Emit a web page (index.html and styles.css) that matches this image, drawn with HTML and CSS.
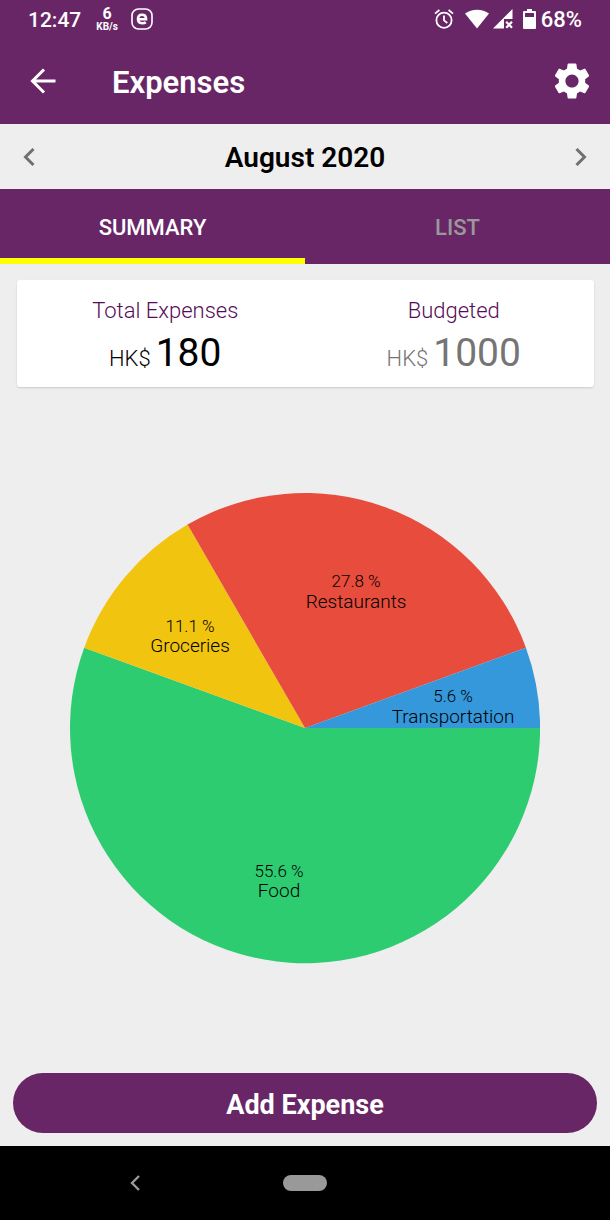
FILE: index.html
```html
<!DOCTYPE html>
<html lang="en">
<head>
<meta charset="utf-8">
<meta name="viewport" content="width=device-width, initial-scale=1">
<title>Expenses</title>
<link rel="stylesheet" href="styles.css">
</head>
<body>
<div class="status-bar">
  <div class="status-group">
    <span class="clock">12:47</span>
    <span class="net-speed"><b class="net-value">6</b><b class="net-unit">KB/s</b></span>
    <svg class="icon-app" viewBox="0 0 22 22" aria-hidden="true">
      <rect x="1" y="1" width="20" height="20" rx="6.5" fill="none" stroke="currentColor" stroke-width="1.6"/>
      <path d="M14.8 14.3C13.9 15 12.8 15.2 11.2 15.2C8 15.2 7 13.8 7 11C7 8.2 8.2 6.8 11 6.8C13.9 6.8 15 8 15 10.8V11.3H8" fill="none" stroke="currentColor" stroke-width="2.6"/>
    </svg>
  </div>
  <div class="status-group status-right">
    <svg class="icon-alarm" viewBox="0 0 20 20" aria-hidden="true" fill="none" stroke="currentColor" stroke-width="1.8">
      <circle cx="10" cy="11.2" r="7.6"/>
      <path d="M10 6.5V11.4L13.3 14"/>
      <path d="M1 4.6L5.4 1M19 4.6L14.6 1"/>
    </svg>
    <svg class="icon-wifi" viewBox="0 0 24 20" aria-hidden="true">
      <path d="M0 4.6C6.5-.6 17.5-.6 24 4.6L12 19.5Z" fill="currentColor"/>
    </svg>
    <svg class="icon-signal" viewBox="0 0 20 20" aria-hidden="true">
      <path d="M0 19.5L19.5 0V10H11V19.5Z" fill="currentColor"/>
      <path d="M13.2 12.8L19 18.8M19 12.8L13.2 18.8" stroke="currentColor" stroke-width="2.2"/>
    </svg>
    <svg class="icon-battery" viewBox="0 0 13 20" aria-hidden="true">
      <path fill="currentColor" fill-rule="evenodd" d="M4 0H9V2H12Q13 2 13 3V19Q13 20 12 20H1Q0 20 0 19V3Q0 2 1 2H4ZM2 4V8H11V4Z"/>
    </svg>
    <span class="battery-level">68%</span>
  </div>
</div>

<header class="app-bar">
  <button class="icon-button" type="button" aria-label="Back">
    <svg class="icon-back" viewBox="0 0 26 26" aria-hidden="true" fill="none" stroke="currentColor" stroke-width="3">
      <path d="M25.5 13H2.5M14 1.5L2.5 13L14 24.5"/>
    </svg>
  </button>
  <h1 class="title">Expenses</h1>
  <button class="icon-button" type="button" aria-label="Settings">
    <svg class="icon-settings" viewBox="0 0 24 24" aria-hidden="true">
      <path fill="currentColor" d="M19.14 12.94c.04-.3.06-.61.06-.94 0-.32-.02-.64-.07-.94l2.03-1.58c.18-.14.23-.41.12-.61l-1.92-3.32c-.12-.22-.37-.29-.59-.22l-2.39.96c-.5-.38-1.03-.7-1.62-.94l-.36-2.54c-.04-.24-.24-.41-.48-.41h-3.84c-.24 0-.43.17-.47.41l-.36 2.54c-.59.24-1.13.57-1.62.94l-2.39-.96c-.22-.08-.47 0-.59.22L2.74 8.87c-.12.21-.08.47.12.61l2.03 1.58c-.05.3-.09.63-.09.94s.02.64.07.94l-2.03 1.58c-.18.14-.23.41-.12.61l1.92 3.32c.12.22.37.29.59.22l2.39-.96c.5.38 1.03.7 1.62.94l.36 2.54c.05.24.24.41.48.41h3.84c.24 0 .44-.17.47-.41l.36-2.54c.59-.24 1.13-.56 1.62-.94l2.39.96c.22.08.47 0 .59-.22l1.92-3.32c.12-.22.07-.47-.12-.61l-2.01-1.58zM12 15.6c-1.98 0-3.6-1.62-3.6-3.6s1.62-3.6 3.6-3.6 3.6 1.62 3.6 3.6-1.62 3.6-3.6 3.6z"/>
    </svg>
  </button>
</header>

<div class="month-bar">
  <button class="month-button" type="button" aria-label="Previous month">
    <svg class="icon-chevron" viewBox="0 0 12 18" aria-hidden="true"><path d="M10.5 1L2.5 9L10.5 17" fill="none" stroke="currentColor" stroke-width="3"/></svg>
  </button>
  <h2 class="month">August 2020</h2>
  <button class="month-button" type="button" aria-label="Next month">
    <svg class="icon-chevron" viewBox="0 0 12 18" aria-hidden="true"><path d="M1.5 1L9.5 9L1.5 17" fill="none" stroke="currentColor" stroke-width="3"/></svg>
  </button>
</div>

<div class="tabs" role="tablist">
  <button class="tab tab-active" type="button" role="tab" aria-selected="true">SUMMARY</button>
  <button class="tab" type="button" role="tab" aria-selected="false">LIST</button>
</div>

<main class="content">
  <section class="card">
    <div class="total">
      <span class="total-label">Total Expenses</span>
      <span class="amount"><span class="currency">HK$ </span>180</span>
    </div>
    <div class="total">
      <span class="total-label">Budgeted</span>
      <span class="amount amount-muted"><span class="currency">HK$ </span>1000</span>
    </div>
  </section>

  <section class="chart">
    <svg class="pie" viewBox="0 0 470 470" role="img" aria-label="Expenses by category">
      <path class="slice-food" d="M235 235H470A235 235 0 1 1 14.2 154.6Z"/>
      <path class="slice-groceries" d="M235 235L14.2 154.6A235 235 0 0 1 117.5 31.5Z"/>
      <path class="slice-restaurants" d="M235 235L117.5 31.5A235 235 0 0 1 455.8 154.6Z"/>
      <path class="slice-transportation" d="M235 235L455.8 154.6A235 235 0 0 1 470 235Z"/>
      <text class="percent" x="286" y="94">27.8 %</text>
      <text class="category" x="286" y="115">Restaurants</text>
      <text class="percent" x="120" y="139">11.1 %</text>
      <text class="category" x="120" y="159">Groceries</text>
      <text class="percent" x="383" y="209">5.6 %</text>
      <text class="category" x="383" y="230">Transportation</text>
      <text class="percent" x="209" y="384">55.6 %</text>
      <text class="category" x="209" y="404">Food</text>
    </svg>
  </section>

  <button class="add-button" type="button">Add Expense</button>
</main>

<nav class="system-nav" aria-label="System">
  <button class="nav-back" type="button" aria-label="Back">
    <svg class="icon-nav-back" viewBox="0 0 10 16" aria-hidden="true"><path d="M9 1L2 8L9 15" fill="none" stroke="currentColor" stroke-width="2.4"/></svg>
  </button>
  <button class="nav-home" type="button" aria-label="Home"></button>
</nav>
</body>
</html>
```

FILE: styles.css
```css
* {
  box-sizing: border-box;
}

body {
  display: flex;
  flex-direction: column;
  min-height: 100vh;
  margin: 0;
  background: #eeeeee;
  color: #000000;
  font-family: Roboto, "Liberation Sans", sans-serif;
}

button {
  margin: 0;
  padding: 0;
  border: 0;
  background: none;
  color: inherit;
  font-family: inherit;
  cursor: pointer;
}

svg {
  display: block;
}

h1,
h2 {
  margin: 0;
  font-weight: 600;
}

/* Status bar */
.status-bar {
  display: flex;
  justify-content: space-between;
  padding: 5px 28px;
  background: #682666;
  color: #ffffff;
}

.status-group {
  display: flex;
  align-items: center;
  gap: 13px;
  height: 28px;
}

.status-right {
  gap: 4px;
}

.clock,
.battery-level {
  padding-top: 2px;
  font-size: 21px;
  line-height: 28px;
  font-weight: 500;
}

.battery-level {
  font-size: 22px;
}

.net-speed {
  display: flex;
  flex-direction: column;
  align-items: center;
  padding-left: 2px;
}

.net-value {
  font-size: 16px;
  line-height: 16px;
}

.net-unit {
  font-size: 10px;
  line-height: 10px;
}

.icon-app {
  width: 22px;
  height: 22px;
}

.icon-alarm {
  width: 20px;
  height: 20px;
  margin-right: 7px;
}

.icon-wifi {
  width: 24px;
  height: 20px;
}

.icon-signal {
  width: 20px;
  height: 20px;
  margin-right: 6px;
}

.icon-battery {
  width: 13px;
  height: 20px;
  margin-right: 1px;
}

/* App bar */
.app-bar {
  display: flex;
  align-items: center;
  padding: 21px 16px;
  background: #682666;
  color: #ffffff;
}

.icon-button {
  padding-left: 14px;
}

.icon-back {
  width: 26px;
  height: 26px;
}

.title {
  flex: 1;
  padding: 4px 0 0 56px;
  font-size: 31px;
  line-height: 40px;
}

.icon-settings {
  width: 44px;
  height: 44px;
}

/* Month selector */
.month-bar {
  display: flex;
  align-items: center;
  justify-content: space-between;
  padding: 16px 23px;
}

.month {
  padding-top: 3px;
  font-size: 28px;
  line-height: 30px;
}

.month-button {
  color: #707070;
}

.icon-chevron {
  width: 12px;
  height: 18px;
}

/* Tabs */
.tabs {
  display: grid;
  grid-template-columns: 1fr 1fr;
  background: #682666;
}

.tab {
  padding: 26px 0 18px;
  border-bottom: 6px solid transparent;
  color: #999999;
  font-size: 22px;
  line-height: 25px;
  font-weight: 500;
}

.tab-active {
  border-bottom-color: #ffff00;
  color: #ffffff;
}

/* Summary */
.content {
  display: flex;
  flex: 1;
  flex-direction: column;
  padding: 16px 13px 13px;
}

.card {
  display: grid;
  grid-template-columns: 1fr 1fr;
  gap: 8px;
  margin: 0 3px 0 4px;
  padding: 16px 0 9px 8px;
  border-radius: 3px;
  background: #ffffff;
  box-shadow: 0 1px 2px rgba(0, 0, 0, 0.15);
}

.total {
  display: flex;
  flex-direction: column;
  align-items: center;
  gap: 2px;
}

.total-label {
  color: #560d59;
  font-size: 22px;
  line-height: 30px;
  font-weight: 350;
}

.amount {
  display: flex;
  align-items: baseline;
  gap: 5px;
  font-size: 39px;
  line-height: 50px;
}

.amount-muted {
  color: #757575;
}

.currency {
  font-size: 22px;
  line-height: 30px;
  font-weight: 350;
}

/* Pie chart */
.chart {
  display: flex;
  flex: 1;
  align-items: center;
  justify-content: center;
  padding-bottom: 3px;
}

.pie {
  width: 80.5%;
}

.slice-food {
  fill: #2ecc71;
}

.slice-groceries {
  fill: #f1c40f;
}

.slice-restaurants {
  fill: #e74c3c;
}

.slice-transportation {
  fill: #3498db;
}

.percent,
.category {
  text-anchor: middle;
}

.percent {
  font-size: 17px;
  font-weight: 300;
}

.category {
  font-size: 19px;
  font-weight: 300;
}

.add-button {
  padding: 16px 14px 12px;
  border-radius: 30px;
  background: #682666;
  color: #ffffff;
  font-size: 27px;
  line-height: 32px;
  font-weight: 700;
}

/* System navigation */
.system-nav {
  display: grid;
  grid-template-columns: 1fr 44px 1fr;
  align-items: center;
  justify-items: center;
  padding: 29px 0;
  background: #000000;
  color: #999999;
}

.nav-back {
  margin-right: 13px;
}

.icon-nav-back {
  width: 10px;
  height: 16px;
}

.nav-home {
  width: 44px;
  height: 16px;
  border-radius: 8px;
  background: #999999;
}
```
